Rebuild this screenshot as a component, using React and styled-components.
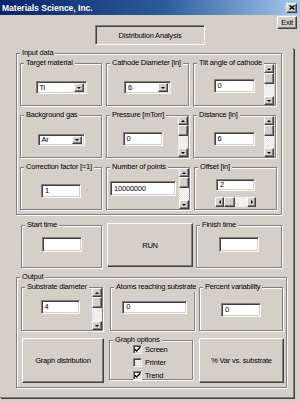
import React from 'react';
import styled, { createGlobalStyle, css } from 'styled-components';

const FACE = '#d4d0c8';

const GlobalStyle = createGlobalStyle`
  html, body {
    margin: 0;
    padding: 0;
    background: ${FACE};
  }
  body {
    font-family: "Liberation Sans", Arial, sans-serif;
    font-size: 7.5px;
    letter-spacing: -0.2px;
    color: #000;
  }
  * { box-sizing: border-box; }
`;

const raised = css`
  background: ${FACE};
  border: 1px solid;
  border-color: #fff #404040 #404040 #fff;
  box-shadow: inset -1px -1px 0 #808080;
`;

const sunken = css`
  border: 1px solid;
  border-color: #808080 #fff #fff #808080;
  box-shadow: inset 1px 1px 0 #404040, inset -1px -1px 0 ${FACE};
`;

const Window = styled.div`
  width: 300px;
  height: 402px;
  display: flex;
  flex-direction: column;
`;

const TitleBar = styled.div`
  height: 15px;
  flex: none;
  display: flex;
  align-items: center;
  justify-content: space-between;
  padding: 0 3px 0 2px;
  background: linear-gradient(to right, #0a246a 0%, #2d5c9a 55%, #a6caf0 100%);
`;

const Title = styled.span`
  color: #fff;
  font-weight: bold;
  font-size: 8.5px;
  letter-spacing: 0;
  white-space: nowrap;
`;

const CloseBtn = styled.div`
  ${raised};
  width: 11px;
  height: 10px;
  display: flex;
  align-items: center;
  justify-content: center;
`;

const TopRow = styled.div`
  height: 33px;
  flex: none;
  display: grid;
  grid-template-columns: 95px 110px 1fr;
  align-items: start;
`;

const Header = styled.div`
  ${sunken};
  grid-column: 2;
  height: 20px;
  margin-top: 10px;
  background: ${FACE};
  display: flex;
  align-items: center;
  justify-content: center;
`;

const Button = styled.div`
  ${raised};
  width: ${p => p.$w}px;
  height: ${p => p.$h}px;
  margin-top: ${p => p.$mt || 0}px;
  margin-left: ${p => p.$ml || 0}px;
  display: flex;
  align-items: center;
  justify-content: center;
  white-space: nowrap;
`;

const ExitButton = styled(Button)`
  grid-column: 3;
  justify-self: end;
  margin-right: 3px;
`;

const Panel = styled.div`
  width: 294px;
  height: 350px;
  flex: none;
  display: flex;
  flex-direction: column;
  align-items: flex-start;
  border-right: 1px solid #808080;
  border-bottom: 1px solid #808080;
  box-shadow: 1px 1px 0 #404040;
`;

const Group = styled.div`
  width: ${p => p.$w}px;
  height: ${p => p.$h}px;
  margin: ${p => p.$mt || 0}px 0 0 ${p => p.$ml || 0}px;
  flex: none;
  border: 1px solid #808080;
  box-shadow: inset 1px 1px 0 #fff, 1px 1px 0 #fff;
  display: grid;
  grid-template-columns: 1fr auto;
  grid-template-rows: auto 1fr;
`;

const Legend = styled.span`
  grid-column: 1;
  grid-row: 1;
  justify-self: start;
  margin: -6px 0 0 3px;
  padding: 0 2px;
  height: 10px;
  line-height: 10px;
  background: ${FACE};
  white-space: nowrap;
`;

const Body = styled.div`
  grid-column: 1;
  grid-row: 2;
  min-width: 0;
  display: flex;
  flex-direction: ${p => (p.$col ? 'column' : 'row')};
  align-items: center;
  justify-content: center;
  gap: ${p => p.$gap || 0}px;
  padding: ${p => p.$pt || 0}px 0 ${p => p.$pb || 0}px ${p => p.$pl || 0}px;
`;

const Stack = styled.div`
  grid-column: 1;
  grid-row: 2;
  display: flex;
  flex-direction: column;
  align-items: flex-start;
  gap: ${p => p.$gap}px;
  padding: ${p => p.$pt}px 0 0 ${p => p.$pl}px;
`;

const Row = styled.div`
  display: flex;
  align-items: flex-start;
  gap: ${p => p.$gap || 4}px;
`;

const StartRow = styled.div`
  display: flex;
  align-items: flex-start;
  margin: 7px 0 0 21px;
  height: 46px;
`;

const Field = styled.div`
  ${sunken};
  background: #fff;
  width: ${p => p.$w}px;
  height: ${p => p.$h || 14}px;
  flex: none;
  display: flex;
  align-items: center;
  padding-left: 3px;
  line-height: 1;
  white-space: nowrap;
`;

const Combo = styled(Field)`
  padding-right: 2px;
  justify-content: space-between;
`;

const DropBtn = styled.div`
  ${raised};
  width: 10px;
  height: calc(100% - 2px);
  display: flex;
  align-items: center;
  justify-content: center;
`;

const arrows = {
  up: 'border-width: 0 2px 2px 2px; border-color: transparent transparent #000 transparent;',
  down: 'border-width: 2px 2px 0 2px; border-color: #000 transparent transparent transparent;',
  left: 'border-width: 2px 2px 2px 0; border-color: transparent #000 transparent transparent;',
  right: 'border-width: 2px 0 2px 2px; border-color: transparent transparent transparent #000;',
};

const Arrow = styled.span`
  width: 0;
  height: 0;
  border-style: solid;
  ${p => arrows[p.$dir]}
`;

const track = css`
  background: repeating-conic-gradient(#fff 0 25%, #e4e2dd 0 50%) 0 0 / 2px 2px;
`;

const VScroll = styled.div`
  ${track};
  grid-column: 2;
  grid-row: 1 / 3;
  width: 10px;
  margin-right: ${p => p.$mr || 0}px;
  display: flex;
  flex-direction: column;
`;

const HScroll = styled.div`
  ${track};
  width: ${p => p.$w}px;
  height: 10px;
  display: flex;
`;

const ScrollBtn = styled.div`
  ${raised};
  flex: none;
  width: ${p => (p.$h ? 9 : 10)}px;
  height: ${p => (p.$h ? 10 : 9)}px;
  display: flex;
  align-items: center;
  justify-content: center;
`;

const Thumb = styled.div`
  ${raised};
  flex: none;
  width: ${p => (p.$h ? 11 : 10)}px;
  height: ${p => (p.$h ? 10 : 11)}px;
`;

const Spacer = styled.div`
  flex: 1;
`;

const CheckRow = styled.div`
  display: flex;
  align-items: center;
  gap: 3px;
  height: 9px;
`;

const Box = styled.div`
  ${sunken};
  width: 9px;
  height: 9px;
  background: ${p => (p.$grey ? '#eeede9' : '#fff')};
  display: flex;
  align-items: center;
  justify-content: center;
`;

function VBar({ mr }) {
  return (
    <VScroll $mr={mr}>
      <ScrollBtn><Arrow $dir="up" /></ScrollBtn>
      <Thumb />
      <Spacer />
      <ScrollBtn><Arrow $dir="down" /></ScrollBtn>
    </VScroll>
  );
}

function HBar({ w }) {
  return (
    <HScroll $w={w}>
      <ScrollBtn $h><Arrow $dir="left" /></ScrollBtn>
      <Thumb $h />
      <Spacer />
      <ScrollBtn $h><Arrow $dir="right" /></ScrollBtn>
    </HScroll>
  );
}

function Check({ on, grey, label }) {
  return (
    <CheckRow>
      <Box $grey={grey}>
        {on && (
          <svg width="7" height="7" viewBox="0 0 7 7">
            <path d="M0.8 3.2 L2.6 5 L6.2 1.2" fill="none" stroke="#000" strokeWidth="1.4" />
          </svg>
        )}
      </Box>
      <span>{label}</span>
    </CheckRow>
  );
}

export default function App() {
  return (
    <>
      <GlobalStyle />
      <Window>
        <TitleBar>
          <Title>Materials Science, Inc.</Title>
          <CloseBtn>
            <svg width="6" height="5" viewBox="0 0 6 5">
              <path d="M0.5 0.5 L5.5 4.5 M5.5 0.5 L0.5 4.5" stroke="#000" strokeWidth="1.3" />
            </svg>
          </CloseBtn>
        </TitleBar>

        <TopRow>
          <Header>Distribution Analysis</Header>
          <ExitButton $w={20} $h={13} $mt={1}>Exit</ExitButton>
        </TopRow>

        <Panel>
          <Group $w={266} $h={162} $mt={5} $ml={16}>
            <Legend>Input data</Legend>
            <Stack $gap={9} $pt={5} $pl={3}>
              <Row>
                <Group $w={82} $h={43}>
                  <Legend>Target material</Legend>
                  <Body $pt={2}>
                    <Combo $w={51} $h={13}>Ti<DropBtn><Arrow $dir="down" /></DropBtn></Combo>
                  </Body>
                </Group>
                <Group $w={83} $h={43}>
                  <Legend>Cathode Diameter [in]</Legend>
                  <Body $pt={2}>
                    <Combo $w={47} $h={13}>6<DropBtn><Arrow $dir="down" /></DropBtn></Combo>
                  </Body>
                </Group>
                <Group $w={83} $h={43}>
                  <Legend>Tilt angle of cathode</Legend>
                  <Body $pl={10} $pb={2}>
                    <Field $w={41}>0</Field>
                  </Body>
                  <VBar mr={1} />
                </Group>
              </Row>
              <Row>
                <Group $w={82} $h={43}>
                  <Legend>Background gas</Legend>
                  <Body $pt={2}>
                    <Combo $w={47} $h={12}>Ar<DropBtn><Arrow $dir="down" /></DropBtn></Combo>
                  </Body>
                </Group>
                <Group $w={83} $h={43}>
                  <Legend>Pressure [mTorr]</Legend>
                  <Body>
                    <Field $w={40}>0</Field>
                  </Body>
                  <VBar />
                </Group>
                <Group $w={83} $h={43}>
                  <Legend>Distance [in]</Legend>
                  <Body $pl={10}>
                    <Field $w={41}>6</Field>
                  </Body>
                  <VBar mr={1} />
                </Group>
              </Row>
              <Row>
                <Group $w={82} $h={43}>
                  <Legend>Correction factor [=1]</Legend>
                  <Body>
                    <Field $w={40}>1</Field>
                  </Body>
                </Group>
                <Group $w={84} $h={43}>
                  <Legend>Number of points</Legend>
                  <Body $pb={4}>
                    <Field $w={66} $h={15}>10000000</Field>
                  </Body>
                  <VBar />
                </Group>
                <Group $w={83} $h={43}>
                  <Legend>Offset [in]</Legend>
                  <Body $col $gap={6} $pt={4}>
                    <Field $w={39} $h={12}>2</Field>
                    <HBar w={41} />
                  </Body>
                </Group>
              </Row>
            </Stack>
          </Group>

          <StartRow>
            <Group $w={81} $h={43} $mt={3}>
              <Legend>Start time</Legend>
              <Body $pb={8}>
                <Field $w={40} $h={15} />
              </Body>
            </Group>
            <Button $w={86} $h={44} $mt={1} $ml={5}>RUN</Button>
            <Group $w={86} $h={43} $mt={3} $ml={3}>
              <Legend>Finish time</Legend>
              <Body $pb={8}>
                <Field $w={40} $h={15} />
              </Body>
            </Group>
          </StartRow>

          <Group $w={271} $h={111} $mt={9} $ml={16}>
            <Legend>Output</Legend>
            <Stack $gap={7} $pt={5} $pl={4}>
              <Row $gap={7}>
                <Group $w={82} $h={44}>
                  <Legend>Substrate diameter</Legend>
                  <Body $pb={8} $pl={6}>
                    <Field $w={39}>4</Field>
                  </Body>
                  <VBar />
                </Group>
                <Row $gap={4}>
                  <Group $w={85} $h={44}>
                    <Legend>Atoms reaching substrate</Legend>
                    <Body $pb={8}>
                      <Field $w={65} $h={13}>0</Field>
                    </Body>
                  </Group>
                  <Group $w={84} $h={44}>
                    <Legend>Percent variability</Legend>
                    <Body $pb={2}>
                      <Field $w={40}>0</Field>
                    </Body>
                  </Group>
                </Row>
              </Row>
              <Row $gap={5}>
                <Button $w={82} $h={45} $ml={1}>Graph distribution</Button>
                <Group $w={84} $h={40} $mt={2}>
                  <Legend>Graph options</Legend>
                  <Stack $gap={4} $pt={0} $pl={23}>
                    <Check on label="Screen" />
                    <Check grey label="Printer" />
                    <Check on label="Trend" />
                  </Stack>
                </Group>
                <Button $w={85} $h={45} $ml={1}>% Var vs. substrate</Button>
              </Row>
            </Stack>
          </Group>
        </Panel>
      </Window>
    </>
  );
}
